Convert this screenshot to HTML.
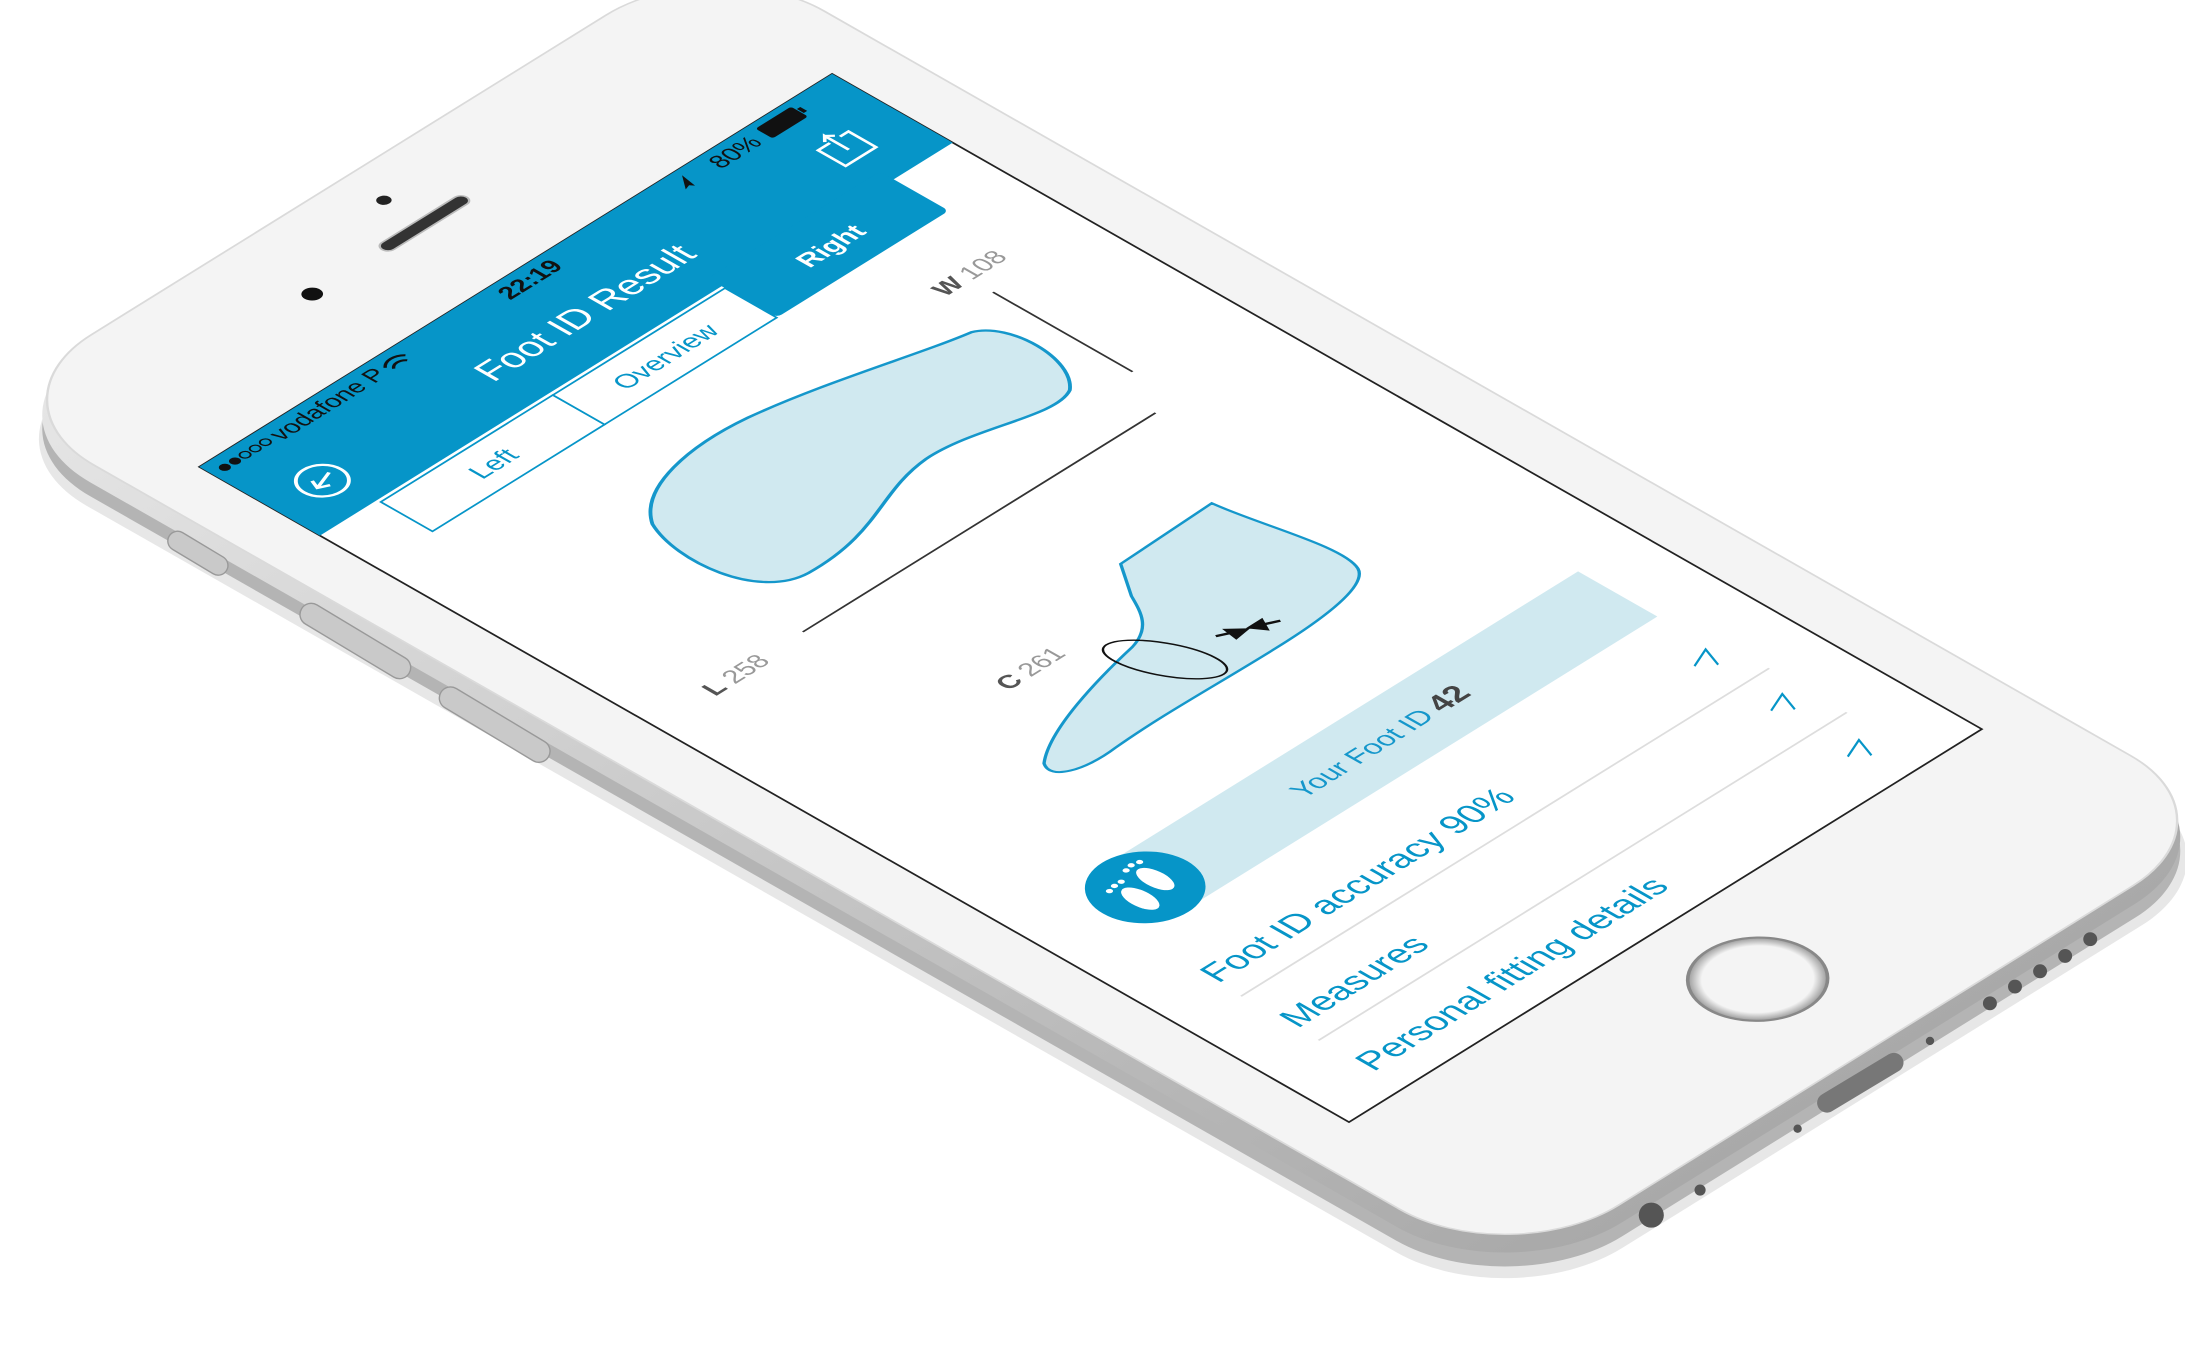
<!DOCTYPE html>
<html><head><meta charset="utf-8">
<style>
html,body{margin:0;padding:0;background:#fff;width:2185px;height:1362px;overflow:hidden}
svg{display:block}
text{font-family:"Liberation Sans",Arial,sans-serif}
</style></head>
<body>
<svg width="2185" height="1362" viewBox="0 0 1568 977.4" xmlns="http://www.w3.org/2000/svg">
<defs>
<linearGradient id="side" x1="0" y1="0" x2="0" y2="1">
<stop offset="0" stop-color="#e6e6e6"/><stop offset="1" stop-color="#a9a9a9"/>
</linearGradient>
<radialGradient id="home" cx="0.5" cy="0.5" r="0.5">
<stop offset="0.8" stop-color="#f4f4f4"/><stop offset="1" stop-color="#9a9a9a"/>
</radialGradient>
</defs>
<g transform="matrix(1.211,-0.752,1.237,0.705,143,360)" opacity="0.2">
<rect x="-34" y="-98" width="440" height="892" rx="66" fill="#888"/>
</g>
<g transform="matrix(1.211,-0.752,1.237,0.705,143,356)">
<rect x="-31" y="-99" width="436" height="890" rx="66" fill="#b4b4b4"/>
</g>
<g transform="matrix(1.211,-0.752,1.237,0.705,143,346)">
<rect x="-31" y="-99" width="436" height="890" rx="66" fill="url(#side)"/>
</g>
<g fill="#c9c9c9" stroke="#999" stroke-width="1">
<rect x="118" y="390" width="48" height="14" rx="7" transform="rotate(31 142 397)"/>
<rect x="210" y="452" width="90" height="16" rx="8" transform="rotate(31 255 460)"/>
<rect x="310" y="512" width="90" height="16" rx="8" transform="rotate(31 355 520)"/>
</g>
<g fill="#555">
<rect x="1300" y="770" width="70" height="14" rx="7" transform="rotate(-31 1335 777)" fill="#777"/>
<circle cx="1185" cy="872" r="9"/>
<circle cx="1220" cy="854" r="4"/>
<circle cx="1290" cy="810" r="3"/>
<circle cx="1385" cy="747" r="3"/>
<circle cx="1428" cy="720" r="5"/><circle cx="1446" cy="708" r="5"/><circle cx="1464" cy="697" r="5"/><circle cx="1482" cy="686" r="5"/><circle cx="1500" cy="674" r="5"/>
</g>
<g transform="matrix(1.211,-0.752,1.237,0.705,143,335)">
<rect x="-29" y="-97" width="433" height="886" rx="64" fill="#f4f4f4" stroke="#dadada" stroke-width="1"/>
<rect x="160" y="-54" width="50" height="7" rx="3.5" fill="#333" stroke="#bbb" stroke-width="1"/>
<circle cx="185" cy="-74" r="3.2" fill="#222"/>
<circle cx="118" cy="-50" r="4.5" fill="#111"/>
<circle cx="187" cy="721" r="29" fill="url(#home)" stroke="#888" stroke-width="1.5"/>
<rect x="0" y="0" width="375" height="667" fill="#fff" stroke="#222" stroke-width="1"/>
<rect x="0" y="0" width="375" height="70" fill="#0695c8"/>
<g fill="#111" font-size="12.5">
<circle cx="7" cy="8" r="2.5"/><circle cx="13" cy="8" r="2.5"/>
<circle cx="19" cy="8" r="2.3" fill="none" stroke="#111" stroke-width="0.8"/>
<circle cx="25" cy="8" r="2.3" fill="none" stroke="#111" stroke-width="0.8"/>
<circle cx="31" cy="8" r="2.3" fill="none" stroke="#111" stroke-width="0.8"/>
<text x="36" y="12.5">vodafone P</text>
<path d="M104,11 a5,5 0 0 1 8,0 M102,8 a8,8 0 0 1 12,0" stroke="#111" stroke-width="1.4" fill="none"/>
<text x="187" y="13" text-anchor="middle" font-weight="bold" font-size="12.5">22:19</text>
<path d="M276,12 l6,-8 l-1.5,9 l-1.5,-2z"/>
<text x="296" y="13">80%</text>
<rect x="326" y="3.5" width="21" height="10" rx="1.5" fill="#111"/><rect x="347.5" y="6.5" width="2" height="4" fill="#111"/>
</g>
<text x="186" y="48" text-anchor="middle" fill="#fff" font-size="19">Foot ID Result</text>
<circle cx="28" cy="44" r="11" fill="none" stroke="#fff" stroke-width="1.6"/>
<path d="M34,42 L23,46 M25,41 L23,46 L28,48.5" stroke="#fff" stroke-width="1.6" fill="none"/>
<path d="M340,33 h-7 v16 h18 v-16 h-5 M342,42 v-14 l-3,3 M342,28 l3,3" stroke="#fff" stroke-width="1.5" fill="none"/>
<rect x="34" y="72" width="102" height="30" fill="#fff" stroke="#0695c8" stroke-width="1"/>
<rect x="136" y="72" width="102" height="30" fill="#fff" stroke="#0695c8" stroke-width="1"/>
<rect x="238" y="62" width="102" height="40" rx="3" fill="#0695c8"/>
<text x="85" y="92" text-anchor="middle" fill="#0695c8" font-size="13.5">Left</text>
<text x="187" y="92" text-anchor="middle" fill="#0695c8" font-size="13.5">Overview</text>
<text x="289" y="88" text-anchor="middle" fill="#fff" font-size="13.5" font-weight="bold">Right</text>
<path d="M100,165 C115,143 150,138 180,142 C220,148 260,163 286,168 C302,175 302,212 285,226 C268,235 240,215 210,216 C180,218 160,238 120,236 C92,234 88,190 100,165 Z" fill="#d0e9f0" stroke="#1597cb" stroke-width="1.6"/>
<line x1="312" y1="155" x2="312" y2="236" stroke="#333" stroke-width="1"/>
<text x="296" y="143" fill="#555" font-size="13"><tspan font-weight="bold">W</tspan> <tspan fill="#999">108</tspan></text>
<line x1="89" y1="263" x2="298" y2="263" stroke="#333" stroke-width="1"/>
<text x="32" y="268" fill="#555" font-size="13"><tspan font-weight="bold">L</tspan> <tspan fill="#999">258</tspan></text>
<path d="M213,326 L269,324 C272,350 285,385 278,400 C272,412 240,414 215,414 C180,414 150,412 120,414 C100,416 85,410 92,400 C110,385 150,375 175,370 C190,366 195,355 200,345 Z" fill="#d0e9f0" stroke="#1597cb" stroke-width="1.4"/>
<ellipse cx="178" cy="386" rx="11" ry="27" transform="rotate(-25 178 386)" fill="none" stroke="#111" stroke-width="1"/>
<path d="M204,390 l10,5 M216,396 l-6,-6 l-1,7z M230,402 l-10,-5 M218,396 l7,0 l-3,6z" stroke="#111" stroke-width="1.6" fill="#111"/>
<text x="118" y="354" fill="#555" font-size="13"><tspan font-weight="bold">C</tspan> <tspan fill="#999">261</tspan></text>
<rect x="59" y="468" width="280" height="46" fill="#d0e9f0"/>
<text x="198" y="496" text-anchor="middle" fill="#1597cb" font-size="14">Your Foot ID <tspan fill="#444" font-size="16" font-weight="bold">42</tspan></text>
<circle cx="59" cy="491" r="25" fill="#0695c8"/>
<g fill="#fff">
<ellipse cx="52" cy="495" rx="5" ry="10"/><ellipse cx="66" cy="490" rx="5" ry="10"/>
<circle cx="47" cy="482" r="1.5"/><circle cx="51" cy="481" r="1.5"/><circle cx="55" cy="481" r="1.5"/>
<circle cx="62" cy="477" r="1.5"/><circle cx="66" cy="476" r="1.5"/><circle cx="70" cy="477" r="1.5"/>
</g>
<g fill="#0695c8" font-size="18">
<text x="32" y="560">Foot ID accuracy 90%</text>
<text x="32" y="606">Measures</text>
<text x="32" y="650">Personal fitting details</text>
</g>
<line x1="32" y1="573" x2="345" y2="573" stroke="#ddd"/>
<line x1="32" y1="618" x2="345" y2="618" stroke="#ddd"/>
</g>
<g stroke="#0695c8" stroke-width="1.6" fill="none">
<path d="M1216,478 L1224,466 L1233,477"/>
<path d="M1271,510 L1279,498 L1288,509"/>
<path d="M1326,543 L1334,531 L1343,542"/>
</g>
</svg>
</body></html>
